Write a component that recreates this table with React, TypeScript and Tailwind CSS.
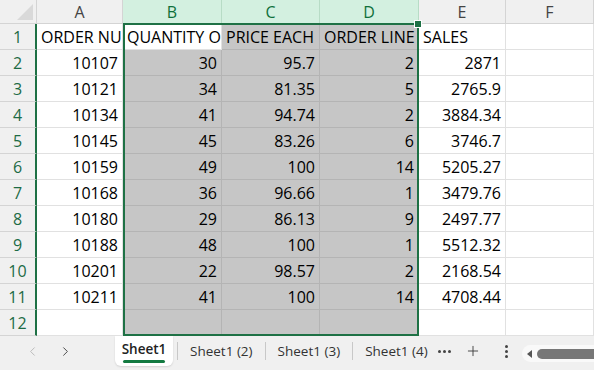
import React from 'react';
import { ChevronLeft, ChevronRight, Plus } from 'lucide-react';

const COLS = ['A', 'B', 'C', 'D', 'E', 'F'];
const SELECTED = ['B', 'C', 'D'];

const HEADER_ROW = ['ORDER NUMBER', 'QUANTITY ORDERED', 'PRICE EACH', 'ORDER LINE NUMBER', 'SALES', ''];

const DATA: (number | string)[][] = [
  [10107, 30, 95.7, 2, 2871],
  [10121, 34, 81.35, 5, 2765.9],
  [10134, 41, 94.74, 2, 3884.34],
  [10145, 45, 83.26, 6, 3746.7],
  [10159, 49, 100, 14, 5205.27],
  [10168, 36, 96.66, 1, 3479.76],
  [10180, 29, 86.13, 9, 2497.77],
  [10188, 48, 100, 1, 5512.32],
  [10201, 22, 98.57, 2, 2168.54],
  [10211, 41, 100, 14, 4708.44],
];

const cellFont = { fontFamily: '"Open Sans", Arial, sans-serif' };

const Cell: React.FC<{ value: string | number; col: number; row: number }> = ({ value, col, row }) => {
  const letter = COLS[col];
  // B1 is the active cell, so it stays white
  const active = letter === 'B' && row === 1;
  const shaded = SELECTED.includes(letter) && !active;
  const isNumber = typeof value === 'number';
  return (
    <div
      className={`flex items-end overflow-hidden whitespace-nowrap border-r border-b px-[4px] pb-[1px] text-[16px] leading-[22px] text-black ${
        shaded ? 'bg-[#c6c6c6] border-[#b4b4b4]' : 'bg-white border-[#e1e1e1]'
      } ${isNumber ? 'justify-end' : 'justify-start'}`}
    >
      {value === '' ? null : String(value)}
    </div>
  );
};

const Sheet: React.FC = () => {
  const rows: (string | number)[][] = [HEADER_ROW, ...DATA.map((r) => [...r, '']), ['', '', '', '', '', '']];

  return (
    <div className="relative h-[336px] w-full" style={cellFont}>
      <div className="grid grid-cols-[37px_86px_99px_98px_99px_87px_88px] grid-rows-[24px_repeat(12,26px)]">
        {/* corner */}
        <div className="relative border-r border-b border-[#d4d4d4] bg-[#f0f0f0]">
          <svg className="absolute right-[3px] bottom-[3px]" width="16" height="16" viewBox="0 0 16 16">
            <polygon points="16,0 16,16 0,16" fill="#d9d9d9" />
          </svg>
        </div>
        {COLS.map((c) => {
          const sel = SELECTED.includes(c);
          return (
            <div
              key={c}
              className={`flex items-center justify-center border-r border-b text-[16px] ${
                sel
                  ? 'bg-[#d3f0e0] text-[#0f703b] border-[#b7dcc6]'
                  : 'bg-[#f0f0f0] text-[#444] border-[#d4d4d4]'
              }`}
            >
              {c}
            </div>
          );
        })}

        {rows.map((r, ri) => (
          <React.Fragment key={ri}>
            <div className="flex items-end justify-center border-r-2 border-b border-r-[#1e7145] border-b-[#d4d4d4] bg-[#f0f0f0] pb-[1px] text-[16px] leading-[22px] text-[#1d6b45]">
              {ri + 1}
            </div>
            {r.map((v, ci) => (
              <Cell key={ci} value={v} col={ci} row={ri + 1} />
            ))}
          </React.Fragment>
        ))}
      </div>

      {/* selection outline over B:D */}
      <div className="pointer-events-none absolute left-[123px] top-[23px] h-[313px] w-[296px] border-2 border-[#1e7145]">
        <div className="absolute -right-[4px] -top-[4px] h-[6px] w-[6px] bg-[#1e7145] ring-1 ring-white" />
      </div>
    </div>
  );
};

const TabBar: React.FC = () => {
  const tabs = ['Sheet1 (2)', 'Sheet1 (3)', 'Sheet1 (4)'];
  return (
    <div
      className="flex h-[34px] items-start bg-[#f0f0f0] text-[13.5px] text-[#333]"
      style={{ fontFamily: '"Open Sans", "Noto Sans", sans-serif' }}
    >
      <div className="flex h-[30px] w-[115px] items-center pl-[25px] gap-[18px]">
        <ChevronLeft size={15} strokeWidth={1.4} className="text-[#b3b3b3]" />
        <ChevronRight size={15} strokeWidth={1.4} className="text-[#333]" />
      </div>
      <div className="flex h-[30px] w-[58px] flex-col items-center justify-center rounded-b-md bg-white shadow-[0_1px_2px_rgba(0,0,0,0.12)]">
        <span className="font-semibold text-[#222]">Sheet1</span>
        <span className="mt-[1px] h-[2.5px] w-[42px] rounded-full bg-[#137a41]" />
      </div>
      {tabs.map((t) => (
        <div key={t} className="flex h-[30px] items-center">
          <span className="mx-[4px] h-[18px] w-px bg-[#c8c8c8]" />
          <span className="px-[8px] whitespace-nowrap">{t}</span>
        </div>
      ))}
      <div className="flex h-[30px] items-center gap-[2px] pl-[2px]">
        <span className="h-[3px] w-[3px] rounded-full bg-[#444]" />
        <span className="h-[3px] w-[3px] rounded-full bg-[#444]" />
        <span className="h-[3px] w-[3px] rounded-full bg-[#444]" />
      </div>
      <div className="flex h-[30px] items-center pl-[14px]">
        <Plus size={16} strokeWidth={1.3} className="text-[#333]" />
      </div>
      <div className="flex h-[30px] flex-col items-center justify-center gap-[2px] pl-[24px]">
        <span className="h-[3px] w-[3px] rounded-full bg-[#444]" />
        <span className="h-[3px] w-[3px] rounded-full bg-[#444]" />
        <span className="h-[3px] w-[3px] rounded-full bg-[#444]" />
      </div>
      <div className="ml-[14px] mt-[9px] flex h-[17px] flex-1 items-center rounded-l-full bg-[#f9f9f9] pl-[5px]">
        <svg width="5" height="8" viewBox="0 0 5 8">
          <polygon points="5,0 5,8 0,4" fill="#555" />
        </svg>
        <div className="ml-[5px] h-[10px] flex-1 rounded-l-full bg-[#777]" />
      </div>
    </div>
  );
};

const App: React.FC = () => {
  return (
    <div className="h-[370px] w-[594px] overflow-hidden bg-white">
      <Sheet />
      <TabBar />
    </div>
  );
};

export default App;
